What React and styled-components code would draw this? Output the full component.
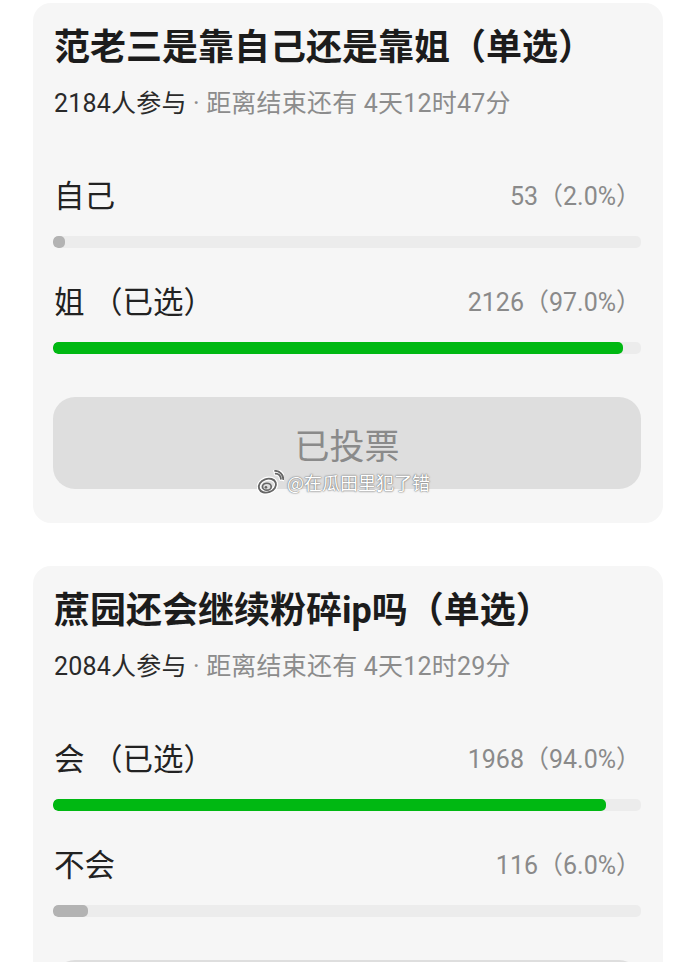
import React from "react";
import styled, { createGlobalStyle } from "styled-components";

const Global = createGlobalStyle`
  html, body { margin: 0; padding: 0; background: #ffffff; }
  body { font-family: Roboto, "Noto Sans CJK SC", sans-serif; }
`;

const Page = styled.div`
  width: 690px;
  padding-top: 3px;
  display: flex;
  flex-direction: column;
  gap: 43px;
`;

const Card = styled.section`
  position: relative;
  margin-left: 33px;
  width: 630px;
  box-sizing: border-box;
  padding: 23px 22px 34px 20px;
  background: #f6f6f6;
  border-radius: 18px;
  display: flex;
  flex-direction: column;
`;

const Title = styled.h2`
  margin: 0;
  font-size: 36px;
  line-height: 44px;
  font-weight: 700;
  color: #1c1c1c;
  font-family: Roboto, "Noto Sans CJK SC", sans-serif;
  padding-left: 1px;
`;

const Meta = styled.div`
  margin-top: 19px;
  font-size: 25px;
  line-height: 30px;
  color: #8c8c8c;
  padding-left: 1px;
  letter-spacing: 0.2px;
`;

const MetaStrong = styled.span`
  color: #2a2a2a;
`;

const Options = styled.div`
  margin-top: 55px;
  display: flex;
  flex-direction: column;
  gap: 32px;
`;

const Option = styled.div`
  display: flex;
  flex-direction: column;
  gap: 22px;
`;

const OptionHead = styled.div`
  display: flex;
  justify-content: space-between;
  align-items: center;
  height: 40px;
`;

const Label = styled.span`
  font-size: 30.5px;
  color: #222222;
  padding-left: 1px;
  white-space: pre;
`;

const Count = styled.span`
  font-size: 25px;
  color: #8a8a8a;
`;

const Track = styled.div`
  height: 12px;
  border-radius: 5px;
  background: #ececec;
  overflow: hidden;
`;

const Fill = styled.div`
  height: 100%;
  border-radius: 5px;
  background: ${(p) => (p.$chosen ? "#00b812" : "#b3b3b3")};
`;

const VotedButton = styled.div`
  margin-top: 43px;
  height: 92px;
  border-radius: 22px;
  background: #dedede;
  display: flex;
  align-items: center;
  justify-content: center;
  font-size: 35px;
  color: #8a8a8a;
`;

const Watermark = styled.div`
  position: absolute;
  left: 224px;
  top: 466px;
  display: flex;
  align-items: center;
  gap: 3px;
  font-size: 18px;
  color: #ffffff;
  text-shadow: 0 0 2px #777, 0 0 1px #555;
  font-family: "Noto Sans CJK SC", sans-serif;
`;

const WeiboLogo = () => (
  <svg width="27" height="25" viewBox="0 0 26 24">
    <g fill="none" stroke="#ffffff" strokeWidth="4" strokeLinecap="round">
      <ellipse cx="10" cy="15" rx="8.5" ry="6.5" transform="rotate(-20 10 15)" />
      <path d="M18 3.5 a5 5 0 0 1 5 5" />
      <path d="M17.5 0.8 a8 8 0 0 1 7.8 8" />
    </g>
    <g fill="none" stroke="#666" strokeWidth="1.8" strokeLinecap="round">
      <ellipse cx="10" cy="15" rx="8.5" ry="6.5" transform="rotate(-20 10 15)" />
      <path d="M18 3.5 a5 5 0 0 1 5 5" />
      <path d="M17.5 0.8 a8 8 0 0 1 7.8 8" />
    </g>
    <ellipse cx="9.5" cy="16" rx="4.2" ry="3.3" fill="none" stroke="#666" strokeWidth="1.6" />
    <circle cx="8.6" cy="16.6" r="1.3" fill="#666" />
  </svg>
);

const polls = [
  {
    title: "范老三是靠自己还是靠姐（单选）",
    count: "2184人参与",
    remain: "4天12时47分",
    options: [
      { label: "自己", value: "53（2.0%）", pct: 2.0 },
      { label: "姐 （已选）", value: "2126（97.0%）", pct: 97.0, chosen: true },
    ],
    watermark: true,
  },
  {
    title: "蔗园还会继续粉碎ip吗（单选）",
    count: "2084人参与",
    remain: "4天12时29分",
    options: [
      { label: "会 （已选）", value: "1968（94.0%）", pct: 94.0, chosen: true },
      { label: "不会", value: "116（6.0%）", pct: 6.0 },
    ],
  },
];

export default function App() {
  return (
    <>
      <Global />
      <Page>
        {polls.map((p) => (
          <Card key={p.title}>
            <Title>{p.title}</Title>
            <Meta>
              <MetaStrong>{p.count}</MetaStrong> · 距离结束还有 {p.remain}
            </Meta>
            <Options>
              {p.options.map((o) => (
                <Option key={o.label}>
                  <OptionHead>
                    <Label>{o.label}</Label>
                    <Count>{o.value}</Count>
                  </OptionHead>
                  <Track>
                    <Fill $chosen={o.chosen} style={{ width: `${o.pct}%` }} />
                  </Track>
                </Option>
              ))}
            </Options>
            <VotedButton>已投票</VotedButton>
            {p.watermark && (
              <Watermark>
                <WeiboLogo />
                @在瓜田里犯了错
              </Watermark>
            )}
          </Card>
        ))}
      </Page>
    </>
  );
}
